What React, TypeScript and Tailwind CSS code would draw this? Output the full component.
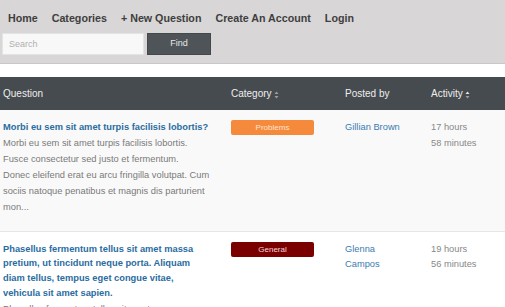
import React from "react";

type Row = {
  title: string;
  body: string[];
  category: string;
  badge: string;
  author: string;
  activity: string[];
  shaded?: boolean;
};

const rows: Row[] = [
  {
    title: "Morbi eu sem sit amet turpis facilisis lobortis?",
    body: [
      "Morbi eu sem sit amet turpis facilisis lobortis.",
      "Fusce consectetur sed justo et fermentum.",
      "Donec eleifend erat eu arcu fringilla volutpat. Cum",
      "sociis natoque penatibus et magnis dis parturient",
      "mon...",
    ],
    category: "Problems",
    badge: "bg-[#f58a3c] text-[#fde3cf]",
    author: "Gillian Brown",
    activity: ["17 hours", "58 minutes"],
    shaded: true,
  },
  {
    title:
      "Phasellus fermentum tellus sit amet massa pretium, ut tincidunt neque porta. Aliquam diam tellus, tempus eget congue vitae, vehicula sit amet sapien.",
    body: ["Phasellus fermentum tellus sit amet massa", "pretium, ut tincidunt neque porta."],
    category: "General",
    badge: "bg-[#7a0000] text-[#f3d6d6]",
    author: "Glenna Campos",
    activity: ["19 hours", "56 minutes"],
  },
];

function SortIcon({ active }: { active?: boolean }) {
  return (
    <svg width="5" height="8" viewBox="0 0 5 8" className="ml-[2px] mt-[2px]">
      <path d="M2.5 0.5 L4.5 3 L0.5 3 Z" fill={active ? "#e6e6e6" : "#9a9fa2"} />
      <path d="M2.5 7.5 L4.5 5 L0.5 5 Z" fill="#9a9fa2" />
    </svg>
  );
}

export default function App() {
  const links = ["Home", "Categories", "+ New Question", "Create An Account", "Login"];

  return (
    <div className="w-[505px] h-[307px] overflow-hidden bg-white font-['Liberation_Sans',Arial,sans-serif]">
      {/* top bar */}
      <div className="h-[64px] bg-[#d8d6d6] border-b border-[#c9c8c8]">
        <nav className="flex gap-[14px] pl-[8px] pt-[11px] text-[10.7px] font-bold text-[#3e3e3e] leading-[14px]">
          {links.map((l) => (
            <a key={l} href="#">
              {l}
            </a>
          ))}
        </nav>
        <div className="flex gap-[3px] pl-[2px] mt-[8px]">
          <input
            placeholder="Search"
            className="w-[142px] h-[22px] bg-[#f8f8f8] border border-[#e4e4e4] px-[6px] text-[9px] placeholder:text-[#b0b0b0] outline-none"
          />
          <button className="w-[64px] h-[22px] bg-[#4e5457] text-[9px] text-[#e8e8e8] border border-[#43484b]">
            Find
          </button>
        </div>
      </div>

      <div className="h-[13px]" />

      {/* table header */}
      <div className="grid grid-cols-[228px_114px_86px_1fr] h-[33px] items-center bg-[#464b4f] text-[10px] text-[#eeeeee]">
        <div className="pl-[3px]">Question</div>
        <div className="pl-[3px] flex items-center">
          Category
          <SortIcon />
        </div>
        <div className="pl-[3px]">Posted by</div>
        <div className="pl-[3px] flex items-center">
          Activity
          <SortIcon active />
        </div>
      </div>

      {rows.map((r, i) => (
        <div
          key={i}
          className={`grid grid-cols-[228px_114px_86px_1fr] pt-[10px] pb-[16px] border-b border-[#e6e6e6] ${
            r.shaded ? "bg-[#f9f9f9]" : "bg-white"
          }`}
        >
          <div className="pl-[3px] w-[213px]">
            <a href="#" className="block text-[9.3px] font-bold leading-[14.7px] text-[#2a6c9f]">
              {r.title}
            </a>
            <p className="text-[9.3px] leading-[16px] text-[#7a7a7a] whitespace-nowrap">
              {r.body.map((line) => (
                <span key={line} className="block">
                  {line}
                </span>
              ))}
            </p>
          </div>
          <div className="pl-[3px]">
            <span
              className={`block w-[83px] h-[15px] rounded-[2px] text-center text-[8px] leading-[15px] ${r.badge}`}
            >
              {r.category}
            </span>
          </div>
          <div className="pl-[3px] pr-[20px] text-[9.3px] leading-[15px] text-[#3b7bb0]">
            <a href="#">{r.author}</a>
          </div>
          <div className="pl-[3px] text-[9.3px] leading-[15.5px] text-[#888888]">
            {r.activity.map((a) => (
              <div key={a}>{a}</div>
            ))}
          </div>
        </div>
      ))}
    </div>
  );
}
